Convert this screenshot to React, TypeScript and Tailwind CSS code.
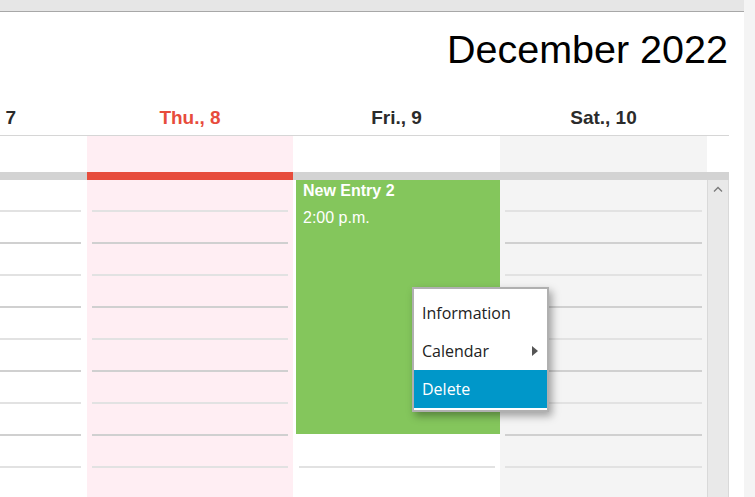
import React from "react";

const rows = Array.from({ length: 10 }, (_, i) => i);

const GridLines: React.FC<{ from?: number }> = ({ from = 0 }) => (
  <div className="flex flex-col">
    {rows.map((i) => (
      <div key={i} className="h-[32px] px-[5px]">
        <div
          className={`h-full border-b-2 ${i < from ? "border-transparent" : i % 2 === 0 ? "border-[#e2e2e2]" : "border-[#d0d0d0]"}`}
        />
      </div>
    ))}
  </div>
);

const ContextMenu: React.FC = () => (
  <div className="absolute left-[412px] top-[107px] w-[137px] bg-white border-2 border-[#b0b0b0] pt-[5px] pb-[2px] shadow-[3px_4px_8px_rgba(0,0,0,0.35)] font-['Open_Sans','Noto_Sans',sans-serif] text-[16px] text-[#222]">
    <div className="h-[38px] flex items-center pl-[8px]">Information</div>
    <div className="h-[38px] flex items-center justify-between pl-[8px] pr-[9px]">
      <span>Calendar</span>
      <span className="w-0 h-0 border-y-[5px] border-y-transparent border-l-[6px] border-l-[#555]" />
    </div>
    <div className="h-[38px] flex items-center pl-[8px] bg-[#0097c9] text-white">Delete</div>
  </div>
);

export default function App() {
  return (
    <div className="flex w-[755px] h-[497px] overflow-hidden bg-white font-['Liberation_Sans',Arial,sans-serif]">
      <div className="flex flex-col w-[744px] shrink-0">
        <div className="h-[12px] shrink-0 bg-[#e6e6e6] border-b border-[#a8a8a8]" />
        <div className="h-[86px] shrink-0 pr-[16px] pt-[15px] text-right text-[39.5px] leading-[45px] text-black">
          December 2022
        </div>

        {/* day headers */}
        <div className="flex w-[729px] h-[38px] shrink-0 border-b border-[#d6d6d6] text-[19px] leading-[22px] font-bold pt-[9px] text-[#2b2b2b]">
          <div className="w-[87px] text-right pr-[71px]">7</div>
          <div className="w-[206px] text-center text-[#e74c3c]">Thu., 8</div>
          <div className="w-[207px] text-center">Fri., 9</div>
          <div className="w-[207px] text-center">Sat., 10</div>
          <div className="flex-1" />
        </div>

        {/* all-day row */}
        <div className="flex w-[729px] h-[36px] shrink-0">
          <div className="w-[87px]" />
          <div className="w-[206px] bg-[#ffeef3]" />
          <div className="w-[207px]" />
          <div className="w-[207px] bg-[#f4f4f4]" />
          <div className="flex-1" />
        </div>

        <div className="flex w-[729px] h-[8px] shrink-0 bg-[#d3d3d3]">
          <div className="w-[87px]" />
          <div className="w-[206px] bg-[#e74c3c]" />
        </div>

        {/* time grid */}
        <div className="relative flex w-[729px] flex-1 overflow-hidden">
          <div className="w-[87px] overflow-hidden flex justify-end">
            <div className="w-[207px] shrink-0 pr-[1px]">
              <GridLines />
            </div>
          </div>
          <div className="w-[206px] bg-[#ffeef3]">
            <GridLines />
          </div>
          <div className="relative w-[207px]">
            <div className="pl-[1px]">
              <GridLines from={8} />
            </div>
            <div className="absolute left-[3px] right-0 top-0 h-[254px] bg-[#84c65c] text-white pl-[7px] pt-[2px] text-[16px] leading-[18px]">
              <div className="font-bold">New Entry 2</div>
              <div className="mt-[9px]">2:00 p.m.</div>
            </div>
          </div>
          <div className="w-[207px] bg-[#f4f4f4]">
            <GridLines />
          </div>
          <div className="w-[22px] bg-[#e9e9e9] border-x border-[#d9d9d9] flex justify-center pt-[6px]">
            <svg width="10" height="6" viewBox="0 0 10 6" className="block">
              <path d="M1 5.5 L5 1.5 L9 5.5" fill="none" stroke="#7a7a7a" strokeWidth="1.3" />
            </svg>
          </div>
          <ContextMenu />
        </div>
      </div>
      <div className="w-[11px] bg-[#f4f4f4]" />
    </div>
  );
}
